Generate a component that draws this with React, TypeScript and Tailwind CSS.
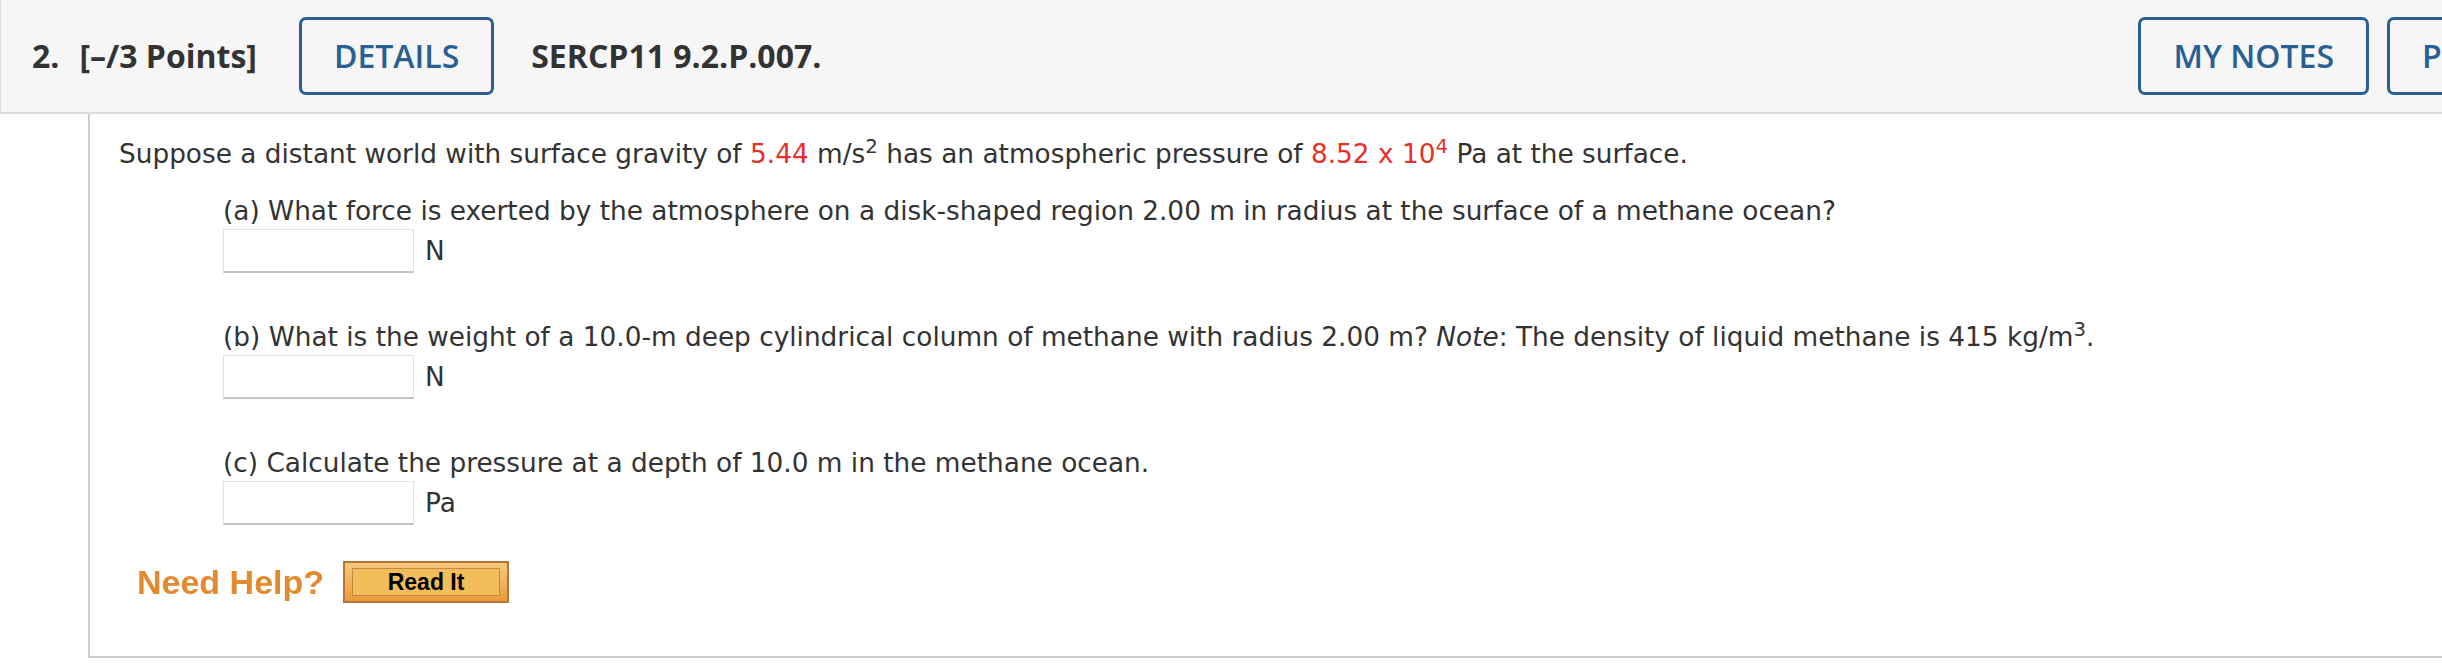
import React from 'react';

const parts = [
  {
    label: '(a)',
    unit: 'N',
    body: <>What force is exerted by the atmosphere on a disk-shaped region 2.00 m in radius at the surface of a methane ocean?</>,
  },
  {
    label: '(b)',
    unit: 'N',
    body: (
      <>
        What is the weight of a 10.0-m deep cylindrical column of methane with radius 2.00 m? <i>Note</i>: The density of liquid
        methane is 415 kg/m<sup>3</sup>.
      </>
    ),
  },
  {
    label: '(c)',
    unit: 'Pa',
    body: <>Calculate the pressure at a depth of 10.0 m in the methane ocean.</>,
  },
];

function HeaderButton({ children, className = '' }: { children: React.ReactNode; className?: string }) {
  return (
    <button
      className={`h-[78px] shrink-0 whitespace-nowrap rounded-[7px] border-[3px] border-[#2a5f93] bg-transparent px-[32px] text-[32px] font-semibold text-[#2a5f93] ${className}`}
    >
      {children}
    </button>
  );
}

export default function App() {
  return (
    <div className="w-full overflow-hidden bg-white">
      <div className="w-[2757px]">
        {/* Question header */}
        <div className="flex h-[114px] items-center border-b-2 border-l border-[#dddddd] bg-[#f6f6f6] pl-[31px] pr-[30px] font-['Open_Sans',sans-serif] text-[#333333]">
          <span className="text-[32px] font-bold">2.</span>
          <span className="ml-[20px] text-[32px] font-bold">[–/3 Points]</span>
          <HeaderButton className="ml-[42px]">DETAILS</HeaderButton>
          <span className="ml-[37px] text-[32px] font-bold">SERCP11 9.2.P.007.</span>
          <div className="flex-1" />
          <HeaderButton>MY NOTES</HeaderButton>
          <HeaderButton className="ml-[18px] w-[340px] text-left">PRACTICE ANOTHER</HeaderButton>
        </div>

        {/* Question body */}
        <div className="ml-[88px] border-b-2 border-l-2 border-[#cccccc] pb-[53px] pl-[29px] pt-[22px] font-['DejaVu_Sans',Verdana,sans-serif] text-[26.35px] leading-[36px] text-[#333333]">
          <p>
            Suppose a distant world with surface gravity of <span className="text-[#e8302a]">5.44</span> m/s<sup>2</sup> has an
            atmospheric pressure of{' '}
            <span className="text-[#e8302a]">
              8.52 x 10<sup>4</sup>
            </span>{' '}
            Pa at the surface.
          </p>

          <div className="mt-[21px] pl-[104px]">
            {parts.map((part) => (
              <div key={part.label} className="mb-[46px]">
                <p>
                  {part.label} {part.body}
                </p>
                <div className="flex items-center">
                  <div className="h-[44px] w-[191px] border border-b-2 border-[#e2e2e2] border-b-[#c4c4c4] bg-white" />
                  <span className="ml-[11px]">{part.unit}</span>
                </div>
              </div>
            ))}
          </div>

          <div className="-mt-[10px] flex items-center pl-[18px]">
            <span className="font-['Liberation_Sans',Arial,sans-serif] text-[34px] font-bold text-[#e38a2e] blur-[0.4px]">
              Need Help?
            </span>
            <div className="ml-[19px] h-[42px] w-[166px] border-2 border-[#b27736] bg-gradient-to-b from-[#f7c97a] to-[#eb9a3c] px-[7px] py-[5px]">
              <div className="flex h-full w-full items-center justify-center border border-[#c28a3e] bg-[#f2bd5a] font-['Liberation_Sans',Arial,sans-serif] text-[23px] font-bold leading-none text-black">
                Read It
              </div>
            </div>
          </div>
        </div>
      </div>
    </div>
  );
}
